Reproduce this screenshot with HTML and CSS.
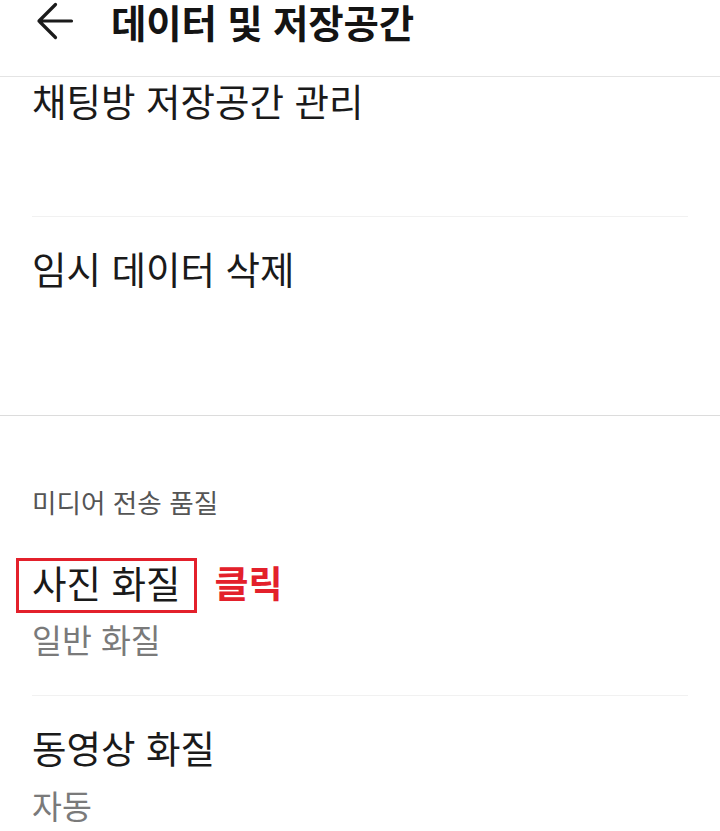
FILE: index.html
```html
<!DOCTYPE html>
<html lang="ko">
<head>
<meta charset="utf-8">
<title>데이터 및 저장공간</title>
<link rel="stylesheet" href="styles.css">
</head>
<body>
<div class="screen">
  <header class="appbar">
    <svg class="back" width="40" height="40" viewBox="0 0 40 40" aria-hidden="true">
      <path d="M4 20 H36.5 M20.5 3.5 L4 20 L20.5 36.5" fill="none" stroke="#1b1b1b" stroke-width="3.2" stroke-linecap="round" stroke-linejoin="round"/>
    </svg>
    <h1 class="title">데이터 및 저장공간</h1>
  </header>

  <section class="section section-first">
    <div class="item item-chat">
      <div class="item-title">채팅방 저장공간 관리</div>
    </div>
    <div class="item item-temp">
      <div class="item-title">임시 데이터 삭제</div>
    </div>
  </section>

  <section class="section section-media">
    <div class="section-label">미디어 전송 품질</div>
    <div class="item item-photo">
      <div class="title-line">
        <span class="item-title highlighted">사진 화질</span>
        <span class="click-note">클릭</span>
      </div>
      <div class="item-sub item-sub-photo">일반 화질</div>
    </div>
    <div class="item item-video">
      <div class="item-title">동영상 화질</div>
      <div class="item-sub item-sub-video">자동</div>
    </div>
  </section>
</div>
</body>
</html>
```

FILE: styles.css
```css
html, body {
  margin: 0;
  padding: 0;
  background: #ffffff;
}

body {
  font-family: "Noto Sans CJK KR", "Noto Sans", sans-serif;
  color: #1a1a1a;
}

.screen {
  width: 720px;
  height: 831px;
  overflow: hidden;
}

.appbar {
  display: flex;
  align-items: flex-start;
  height: 76px;
  padding-left: 35px;
  border-bottom: 1px solid #e4e4e4;
}

.back {
  display: block;
  flex: none;
  margin-top: 1px;
}

.title {
  margin: 0 0 0 36px;
  font-size: 38.5px;
  font-weight: 700;
  line-height: 42px;
  color: #141414;
  letter-spacing: -0.2px;
  white-space: nowrap;
}

.section-first {
  border-bottom: 1px solid #dcdcdc;
}

.item {
  margin: 0 32px;
}

.item-title {
  font-size: 37.5px;
  line-height: 44px;
  color: #1a1a1a;
}

.item-chat {
  height: 138px;
  padding-top: 1px;
  border-bottom: 1px solid #f1f1f1;
}

.item-temp {
  height: 169px;
  padding-top: 29px;
}

.section-label {
  margin: 0 32px;
  padding-top: 70px;
  font-size: 26.6px;
  line-height: 32px;
  color: #555555;
}

.item-photo {
  padding-top: 42px;
  padding-bottom: 37px;
  border-bottom: 1px solid #f1f1f1;
}

.title-line {
  display: flex;
  align-items: center;
}

.highlighted {
  position: relative;
  display: inline-block;
}

.highlighted::after {
  content: "";
  position: absolute;
  left: -16px;
  right: -16px;
  top: -2px;
  bottom: -9px;
  border: 3px solid #e3202b;
}

.click-note {
  margin-left: 34px;
  font-size: 37px;
  font-weight: 700;
  line-height: 44px;
  color: #e3202b;
}

.item-sub {
  font-size: 32.5px;
  line-height: 38px;
  color: #7a7a7a;
}

.item-sub-photo {
  margin-top: 16px;
}

.item-video {
  padding-top: 29px;
}

.item-sub-video {
  margin-top: 17px;
}
```
